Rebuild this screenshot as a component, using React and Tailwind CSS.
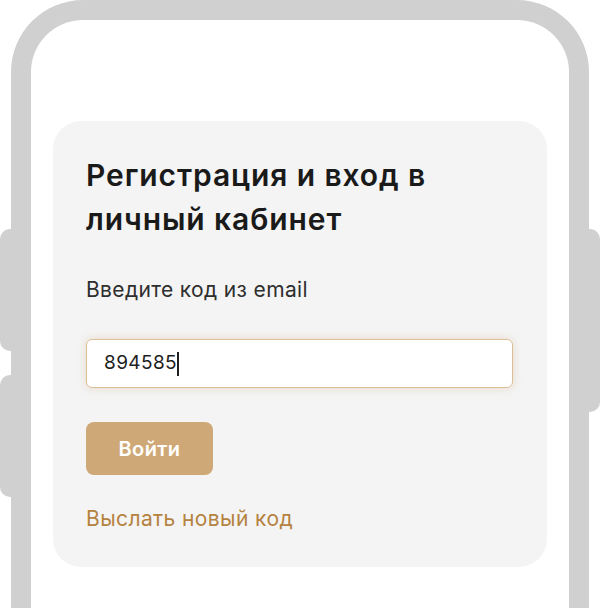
export default function App() {
  return (
    <div
      className="w-[600px] h-[608px] overflow-hidden bg-white flex"
      style={{ fontFamily: "Inter, 'Noto Sans', sans-serif" }}
    >
      {/* left side buttons */}
      <div className="w-[11px] shrink-0 pt-[229px] flex flex-col gap-[24px]">
        <div className="h-[122px] rounded-l-[10px] bg-[#d0d0d0]" />
        <div className="h-[122px] rounded-l-[10px] bg-[#d0d0d0]" />
      </div>

      {/* phone frame */}
      <div className="w-[578px] shrink-0 h-[640px] border-[20px] border-b-0 border-[#d0d0d0] rounded-t-[72px] bg-white pt-[101px] px-[22px]">
        <div className="bg-[#f4f4f4] rounded-[28px] px-[33px] pt-[32px] pb-[36px] flex flex-col items-start">
          <h1 className="max-w-[390px] text-[30px] leading-[44px] font-semibold text-[#1a1a1a] tracking-[0.9px]">
            Регистрация и вход в личный кабинет
          </h1>
          <p className="mt-[37px] text-[21px] leading-[24px] text-[#2e2e2e] tracking-[0.35px]">
            Введите код из email
          </p>
          <div className="mt-[37px] h-[49px] w-[427px] rounded-[6px] border-[1.5px] border-[#dcbf98] bg-white shadow-[0_0_8px_rgba(207,168,119,0.35)] flex items-center pl-[17px]">
            <span className="text-[19px] text-[#1e1e1e] tracking-[0.4px]">894585</span>
            <span className="w-[1.5px] h-[24px] bg-[#1e1e1e]" />
          </div>
          <button className="mt-[34px] w-[127px] h-[53px] rounded-[8px] bg-[#cfa877] text-white text-[20px] font-semibold tracking-[0.4px]">
            Войти
          </button>
          <div className="mt-[32px] text-[21px] leading-[24px] text-[#b5823f] tracking-[0.4px]">
            Выслать новый код
          </div>
        </div>
      </div>

      {/* right side button */}
      <div className="w-[11px] shrink-0 pt-[229px]">
        <div className="h-[183px] rounded-r-[10px] bg-[#d0d0d0]" />
      </div>
    </div>
  );
}
